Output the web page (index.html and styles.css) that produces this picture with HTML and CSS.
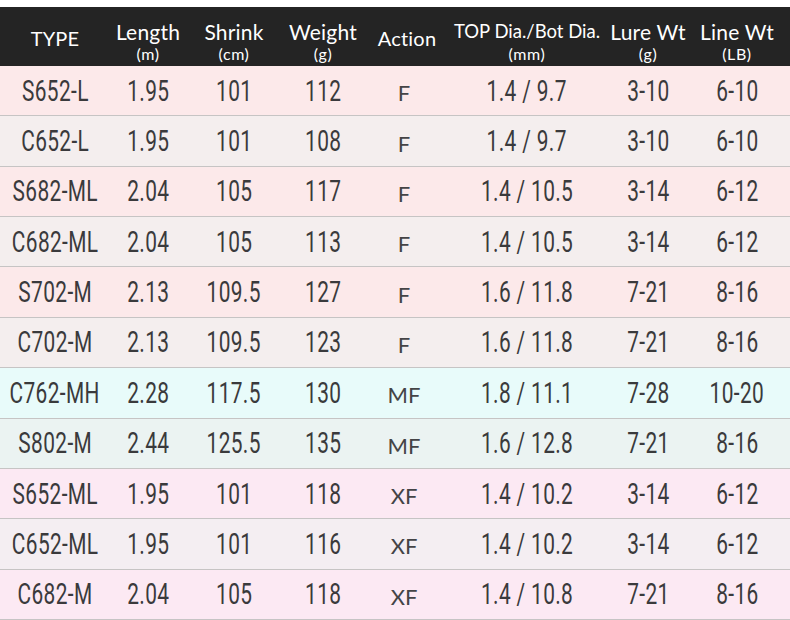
FILE: index.html
```html
<!DOCTYPE html>
<html>
<head>
<meta charset="utf-8">
<link rel="stylesheet" href="styles.css">
</head>
<body>
<div class="sheet">
  <div class="row head">
    <div class="cell solo"><span class="h1">TYPE</span></div>
    <div class="cell"><span class="h1">Length</span><span class="unit">(m)</span></div>
    <div class="cell"><span class="h1">Shrink</span><span class="unit">(cm)</span></div>
    <div class="cell"><span class="h1">Weight</span><span class="unit">(g)</span></div>
    <div class="cell solo"><span class="h1">Action</span></div>
    <div class="cell"><span class="h1 sm">TOP Dia./Bot Dia.</span><span class="unit">(mm)</span></div>
    <div class="cell"><span class="h1">Lure Wt</span><span class="unit">(g)</span></div>
    <div class="cell"><span class="h1">Line Wt</span><span class="unit">(LB)</span></div>
  </div>

  <div class="row pink">
    <div class="cell"><span class="n">S652-L</span></div><div class="cell"><span class="n">1.95</span></div><div class="cell"><span class="n">101</span></div><div class="cell"><span class="n">112</span></div><div class="cell act">F</div><div class="cell"><span class="n">1.4 / 9.7</span></div><div class="cell"><span class="n">3-10</span></div><div class="cell"><span class="n">6-10</span></div>
  </div>
  <div class="row grey">
    <div class="cell"><span class="n">C652-L</span></div><div class="cell"><span class="n">1.95</span></div><div class="cell"><span class="n">101</span></div><div class="cell"><span class="n">108</span></div><div class="cell act">F</div><div class="cell"><span class="n">1.4 / 9.7</span></div><div class="cell"><span class="n">3-10</span></div><div class="cell"><span class="n">6-10</span></div>
  </div>
  <div class="row pink">
    <div class="cell"><span class="n">S682-ML</span></div><div class="cell"><span class="n">2.04</span></div><div class="cell"><span class="n">105</span></div><div class="cell"><span class="n">117</span></div><div class="cell act">F</div><div class="cell"><span class="n">1.4 / 10.5</span></div><div class="cell"><span class="n">3-14</span></div><div class="cell"><span class="n">6-12</span></div>
  </div>
  <div class="row grey">
    <div class="cell"><span class="n">C682-ML</span></div><div class="cell"><span class="n">2.04</span></div><div class="cell"><span class="n">105</span></div><div class="cell"><span class="n">113</span></div><div class="cell act">F</div><div class="cell"><span class="n">1.4 / 10.5</span></div><div class="cell"><span class="n">3-14</span></div><div class="cell"><span class="n">6-12</span></div>
  </div>
  <div class="row pink">
    <div class="cell"><span class="n">S702-M</span></div><div class="cell"><span class="n">2.13</span></div><div class="cell"><span class="n">109.5</span></div><div class="cell"><span class="n">127</span></div><div class="cell act">F</div><div class="cell"><span class="n">1.6 / 11.8</span></div><div class="cell"><span class="n">7-21</span></div><div class="cell"><span class="n">8-16</span></div>
  </div>
  <div class="row grey">
    <div class="cell"><span class="n">C702-M</span></div><div class="cell"><span class="n">2.13</span></div><div class="cell"><span class="n">109.5</span></div><div class="cell"><span class="n">123</span></div><div class="cell act">F</div><div class="cell"><span class="n">1.6 / 11.8</span></div><div class="cell"><span class="n">7-21</span></div><div class="cell"><span class="n">8-16</span></div>
  </div>
  <div class="row cyan">
    <div class="cell"><span class="n">C762-MH</span></div><div class="cell"><span class="n">2.28</span></div><div class="cell"><span class="n">117.5</span></div><div class="cell"><span class="n">130</span></div><div class="cell act">MF</div><div class="cell"><span class="n">1.8 / 11.1</span></div><div class="cell"><span class="n">7-28</span></div><div class="cell"><span class="n">10-20</span></div>
  </div>
  <div class="row cyangrey">
    <div class="cell"><span class="n">S802-M</span></div><div class="cell"><span class="n">2.44</span></div><div class="cell"><span class="n">125.5</span></div><div class="cell"><span class="n">135</span></div><div class="cell act">MF</div><div class="cell"><span class="n">1.6 / 12.8</span></div><div class="cell"><span class="n">7-21</span></div><div class="cell"><span class="n">8-16</span></div>
  </div>
  <div class="row lav">
    <div class="cell"><span class="n">S652-ML</span></div><div class="cell"><span class="n">1.95</span></div><div class="cell"><span class="n">101</span></div><div class="cell"><span class="n">118</span></div><div class="cell act">XF</div><div class="cell"><span class="n">1.4 / 10.2</span></div><div class="cell"><span class="n">3-14</span></div><div class="cell"><span class="n">6-12</span></div>
  </div>
  <div class="row lavgrey">
    <div class="cell"><span class="n">C652-ML</span></div><div class="cell"><span class="n">1.95</span></div><div class="cell"><span class="n">101</span></div><div class="cell"><span class="n">116</span></div><div class="cell act">XF</div><div class="cell"><span class="n">1.4 / 10.2</span></div><div class="cell"><span class="n">3-14</span></div><div class="cell"><span class="n">6-12</span></div>
  </div>
  <div class="row lav">
    <div class="cell"><span class="n">C682-M</span></div><div class="cell"><span class="n">2.04</span></div><div class="cell"><span class="n">105</span></div><div class="cell"><span class="n">118</span></div><div class="cell act">XF</div><div class="cell"><span class="n">1.4 / 10.8</span></div><div class="cell"><span class="n">7-21</span></div><div class="cell"><span class="n">8-16</span></div>
  </div>
</div>
</body>
</html>
```

FILE: styles.css
```css
html, body {
  margin: 0;
  padding: 0;
  background: #ffffff;
}
.sheet {
  width: 790px;
  height: 620px;
  padding-top: 7px;
  box-sizing: border-box;
  display: flex;
  flex-direction: column;
}
.row {
  display: grid;
  grid-template-columns: 110px 76px 96px 82px 86px 154px 88px 90px 8px;
  flex: 1 1 0;
  border-bottom: 1px solid #c6c4c4;
  min-height: 0;
}
.row.head {
  flex: 0 0 59px;
  background: #242424;
  border-bottom: none;
}
.cell {
  display: flex;
  flex-direction: column;
  align-items: center;
  justify-content: center;
  overflow: visible;
  white-space: nowrap;
}
.head .cell {
  color: #ffffff;
  font-family: Lato, "Noto Sans", sans-serif;
  padding-top: 8px;
  box-sizing: border-box;
}
.head .cell.solo {
  padding-top: 4px;
}
.h1 {
  font-size: 21px;
  line-height: 25px;
  letter-spacing: 0.2px;
}
.h1.sm {
  font-size: 18.5px;
  letter-spacing: 0;
}
.head .solo .h1 {
  font-size: 20px;
}
.unit {
  font-size: 16px;
  line-height: 19px;
  letter-spacing: 0.6px;
}
.n {
  display: inline-block;
  font-family: Roboto, "DejaVu Sans", sans-serif;
  font-size: 29px;
  line-height: 30px;
  color: #3a3a3c;
  transform: scaleX(0.72);
  letter-spacing: 0.5px;
}
.act {
  font-family: Lato, "Noto Sans", sans-serif;
  font-size: 22px;
  color: #444446;
  padding-top: 4px;
  padding-right: 6px;
  box-sizing: border-box;
}
.pink { background: #fce9ea; }
.grey { background: #f4eeee; }
.cyan { background: #e8fbfa; }
.cyangrey { background: #ebf3f2; }
.lav { background: #fce9f3; }
.lavgrey { background: #f4eef2; }
```
